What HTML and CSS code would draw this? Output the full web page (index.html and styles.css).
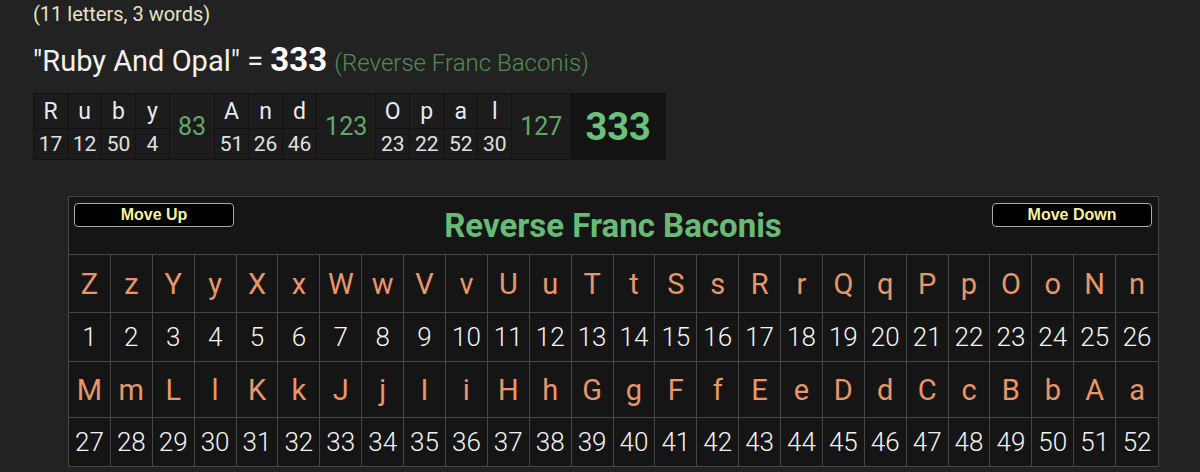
FILE: index.html
```html
<!DOCTYPE html>
<html>
<head>
<meta charset="utf-8">
<link rel="stylesheet" href="styles.css">
</head>
<body>
<div class="page">
  <div class="count">(11 letters, 3 words)</div>
  <div class="result">"Ruby And Opal" = <b class="total">333</b> <span class="cname">(Reverse Franc Baconis)</span></div>
  <table class="breakdown">
    <tr>
      <td class="l">R</td><td class="l">u</td><td class="l">b</td><td class="l">y</td>
      <td class="sum" rowspan="2">83</td>
      <td class="l">A</td><td class="l">n</td><td class="l">d</td>
      <td class="sum" rowspan="2">123</td>
      <td class="l">O</td><td class="l">p</td><td class="l">a</td><td class="l">l</td>
      <td class="sum" rowspan="2">127</td>
      <td class="grand" rowspan="2">333</td>
    </tr>
    <tr>
      <td class="n">17</td><td class="n">12</td><td class="n">50</td><td class="n">4</td>
      <td class="n">51</td><td class="n">26</td><td class="n">46</td>
      <td class="n">23</td><td class="n">22</td><td class="n">52</td><td class="n">30</td>
    </tr>
  </table>

  <div class="cipher">
    <div class="head">
      <button class="btn">Move Up</button>
      <div class="title">Reverse Franc Baconis</div>
      <button class="btn">Move Down</button>
    </div>
    <div class="grid">
      <div class="c let">Z</div><div class="c let">z</div><div class="c let">Y</div><div class="c let">y</div><div class="c let">X</div><div class="c let">x</div><div class="c let">W</div><div class="c let">w</div><div class="c let">V</div><div class="c let">v</div><div class="c let">U</div><div class="c let">u</div><div class="c let">T</div><div class="c let">t</div><div class="c let">S</div><div class="c let">s</div><div class="c let">R</div><div class="c let">r</div><div class="c let">Q</div><div class="c let">q</div><div class="c let">P</div><div class="c let">p</div><div class="c let">O</div><div class="c let">o</div><div class="c let">N</div><div class="c let">n</div>
      <div class="c num">1</div><div class="c num">2</div><div class="c num">3</div><div class="c num">4</div><div class="c num">5</div><div class="c num">6</div><div class="c num">7</div><div class="c num">8</div><div class="c num">9</div><div class="c num">10</div><div class="c num">11</div><div class="c num">12</div><div class="c num">13</div><div class="c num">14</div><div class="c num">15</div><div class="c num">16</div><div class="c num">17</div><div class="c num">18</div><div class="c num">19</div><div class="c num">20</div><div class="c num">21</div><div class="c num">22</div><div class="c num">23</div><div class="c num">24</div><div class="c num">25</div><div class="c num">26</div>
      <div class="c let tall">M</div><div class="c let tall">m</div><div class="c let tall">L</div><div class="c let tall">l</div><div class="c let tall">K</div><div class="c let tall">k</div><div class="c let tall">J</div><div class="c let tall">j</div><div class="c let tall">I</div><div class="c let tall">i</div><div class="c let tall">H</div><div class="c let tall">h</div><div class="c let tall">G</div><div class="c let tall">g</div><div class="c let tall">F</div><div class="c let tall">f</div><div class="c let tall">E</div><div class="c let tall">e</div><div class="c let tall">D</div><div class="c let tall">d</div><div class="c let tall">C</div><div class="c let tall">c</div><div class="c let tall">B</div><div class="c let tall">b</div><div class="c let tall">A</div><div class="c let tall">a</div>
      <div class="c num">27</div><div class="c num">28</div><div class="c num">29</div><div class="c num">30</div><div class="c num">31</div><div class="c num">32</div><div class="c num">33</div><div class="c num">34</div><div class="c num">35</div><div class="c num">36</div><div class="c num">37</div><div class="c num">38</div><div class="c num">39</div><div class="c num">40</div><div class="c num">41</div><div class="c num">42</div><div class="c num">43</div><div class="c num">44</div><div class="c num">45</div><div class="c num">46</div><div class="c num">47</div><div class="c num">48</div><div class="c num">49</div><div class="c num">50</div><div class="c num">51</div><div class="c num">52</div>
    </div>
  </div>
</div>
</body>
</html>
```

FILE: styles.css
```css
html, body {
  margin: 0;
  padding: 0;
  background: #222222;
  font-family: Roboto, "Liberation Sans", sans-serif;
  overflow: hidden;
}
.page {
  padding: 2px 0 0 33px;
}
.count {
  font-size: 20px;
  line-height: 24px;
  color: #e6e2c6;
}
.result {
  margin-top: 16px;
  font-size: 29px;
  line-height: 35px;
  color: #f2f2f2;
}
.total {
  font-size: 33px;
  font-weight: 700;
  color: #ffffff;
}
.cname {
  font-size: 24px;
  font-weight: 300;
  color: #4f8c58;
}
.breakdown {
  margin-top: 12px;
  border-collapse: separate;
  border-spacing: 1px;
  background: #141414;
}
.breakdown td {
  background: #1c1c1c;
  text-align: center;
  padding: 0;
}
.breakdown .l {
  width: 33px;
  height: 34px;
  font-size: 23px;
  color: #e4ecf2;
}
.breakdown .n {
  height: 30px;
  font-size: 21px;
  color: #e0e0e0;
}
.breakdown .sum {
  padding: 0 8px;
  font-size: 25px;
  color: #63a86b;
}
.breakdown .grand {
  background: #131313;
  padding: 0 14px;
  font-size: 38px;
  font-weight: 700;
  color: #6cc17a;
}
.cipher {
  margin: 36px 0 0 35px;
  width: 1089px;
  border: 1px solid #484848;
  background: #151515;
}
.head {
  display: flex;
  align-items: flex-start;
  justify-content: space-between;
  height: 57px;
  padding: 0 6px 0 5px;
  border-bottom: 1px solid #484848;
}
.btn {
  margin-top: 6px;
  width: 160px;
  height: 24px;
  background: #000;
  border: 1px solid #a8a8a8;
  border-radius: 4px;
  color: #f6f29e;
  font-family: "Liberation Sans", Arial, sans-serif;
  font-weight: 700;
  font-size: 16px;
  padding: 0;
}
.title {
  align-self: center;
  margin-top: 0;
  font-size: 33px;
  font-weight: 700;
  color: #68bb76;
}
.grid {
  display: grid;
  grid-template-columns: repeat(26, 1fr);
}
.c {
  display: flex;
  align-items: center;
  justify-content: center;
  border-right: 1px solid #484848;
  border-bottom: 1px solid #484848;
}
.c:nth-child(26n) {
  border-right: none;
}
.c:nth-last-child(-n+26) {
  border-bottom: none;
}
.let {
  height: 57px;
  font-size: 29px;
  color: #e8966a;
}
.let.tall {
  height: 55px;
}
.num {
  height: 48px;
  font-size: 26px;
  font-weight: 300;
  color: #f4f4f4;
}
```
